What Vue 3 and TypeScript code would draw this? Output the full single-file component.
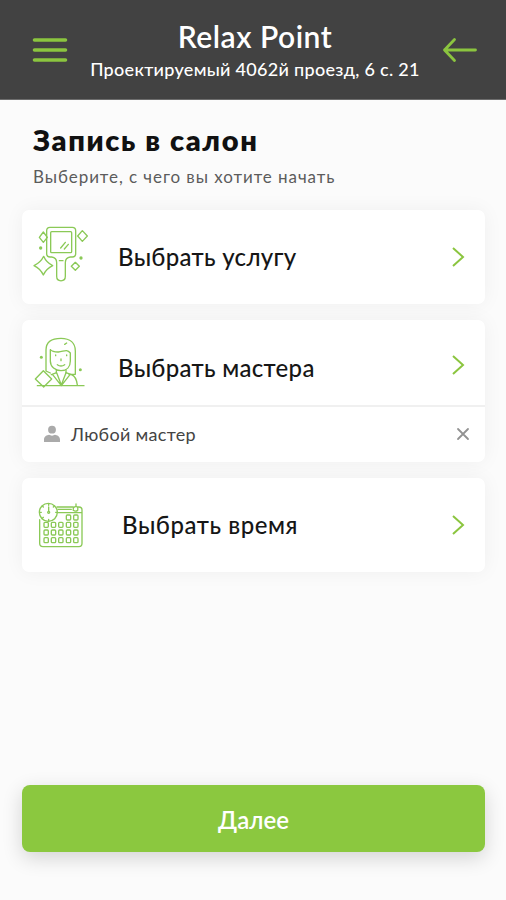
<script setup lang="ts">
import { ref } from 'vue'

const masterChosen = ref(true)
const calendarDays = [
  { x: 124, y: 78 }, { x: 146, y: 78 },
  ...[0, 1, 2].flatMap((row) =>
    [57, 79, 101, 124, 146].map((x) => ({ x, y: 100 + row * 23 })),
  ),
]
</script>

<template>
  <div class="screen">
    <header class="header">
      <button class="icon-button" aria-label="Меню">
        <svg width="36" height="28" viewBox="0 0 36 28" class="menu">
          <path d="M2.500 4H33.500M2.500 14H33.500M2.500 24H33.500" />
        </svg>
      </button>
      <div class="place">
        <h1 class="name">Relax Point</h1>
        <p class="address">Проектируемый 4062й проезд, 6 с. 21</p>
      </div>
      <button class="icon-button" aria-label="Назад">
        <svg width="36" height="28" viewBox="0 0 36 28" class="back">
          <path d="M33.500 14H2.500M12.500 3.500L2.500 14L12.500 24.500" />
        </svg>
      </button>
    </header>

    <main class="content">
      <h2 class="title">Запись в салон</h2>
      <p class="hint">Выберите, с чего вы хотите начать</p>

      <section class="card">
        <div class="row">
          <svg class="picture mirror" viewBox="0 0 225 225">
            <path d="M75 37H142Q152 37 152 47V116Q152 126 142 126H136Q121 128 121 143V184C121 202 95 202 95 184V143Q95 128 80 126H75Q65 126 65 116V47Q65 37 75 37Z" />
            <rect x="77" y="50" width="63" height="63" rx="3" />
            <path d="M107 99L121 82M118 102L130 88M103 137H114" />
            <path d="M56 124Q64 143 83 152Q64 161 55 180Q46 161 27 152Q47 143 56 124Z" />
            <path d="M55 51L67 67L55 82L43 67ZM172 47L187 63L172 79L158 63ZM151 142L163 154L151 166L139 154Z" />
            <g class="dots"><circle cx="47" cy="99" r="5" /><circle cx="168" cy="129" r="5" /></g>
          </svg>
          <span class="label service">Выбрать услугу</span>
          <svg class="chevron" viewBox="0 0 14 22"><path d="M2 2L12 11L2 20" /></svg>
        </div>
      </section>

      <section class="card master-card">
        <div class="row">
          <svg class="picture" viewBox="0 0 225 225">
            <path d="M63 138V75C63 49 82 40 108 40C136 40 151 55 151 78V148H132M63 138L76 144" />
            <path d="M76 74V108C76 126 91 137 108 137C125 137 136 126 136 108V84M76 74Q82 81 99 81C114 82 124 69 136 84" />
            <path d="M97 119Q108 127 119 119M108 102V107M92 90V92M125 90V92M94 134V144M123 134V144" />
            <path d="M79 149L95 143L109 180L123 143L139 149Q154 154 157 180M83 149L109 182M135 149L109 182" />
            <path d="M55 137L80 162L56 186L31 162ZM37 182H177M119 58L125 54" />
            <g class="dots"><circle cx="49" cy="97" r="4.500" /><circle cx="166" cy="134" r="4.500" /></g>
          </svg>
          <span class="label master">Выбрать мастера</span>
          <svg class="chevron" viewBox="0 0 14 22"><path d="M2 2L12 11L2 20" /></svg>
        </div>
        <div v-if="masterChosen" class="choice">
          <svg class="person" width="18" height="18" viewBox="0 0 18 18">
            <circle cx="9" cy="4.700" r="3.900" />
            <path d="M1 17V14.500C1 11.500 4 10 6 9.800C7.800 10.900 10.200 10.900 12 9.800C14 10 17 11.500 17 14.500V17Z" />
          </svg>
          <span class="choice-name">Любой мастер</span>
          <button class="clear" aria-label="Убрать" @click="masterChosen = false">
            <svg width="14" height="14" viewBox="0 0 14 14"><path d="M2 2L12 12M12 2L2 12" /></svg>
          </button>
        </div>
      </section>

      <section class="card">
        <div class="row">
          <svg class="picture calendar" viewBox="0 0 225 225">
            <path d="M96 54H145M158 54H162Q171 54 171 63V163Q171 173 162 173H54Q44 173 44 163V92M97 71H171M145 64Q143 54 153 52V45M153 52Q160 53 158 64Q151 69 145 64M99 61H139" />
            <circle cx="70" cy="70" r="27" />
            <circle cx="71" cy="70" r="3" />
            <path d="M71 54V67M71 44V49M44 70H49M92 70H96M71 91V96M52 51L55 54M88 51L85 54M52 88L55 85" />
            <rect v-for="day in calendarDays" :key="`${day.x}-${day.y}`" :x="day.x" :y="day.y" width="13" height="15" rx="3" />
          </svg>
          <span class="label time">Выбрать время</span>
          <svg class="chevron" viewBox="0 0 14 22"><path d="M2 2L12 11L2 20" /></svg>
        </div>
      </section>

      <button class="next">Далее</button>
    </main>
  </div>
</template>

<style>
body { background: #fbfbfb; }
</style>

<style scoped>
.screen {
  display: flex;
  flex-direction: column;
  height: 900px;
  font-family: Lato, "Open Sans", sans-serif;
  color: #161616;
}
h1, h2, p { margin: 0; font-weight: 400; white-space: nowrap; }
button { padding: 0; border: 0; background: none; font-family: inherit; cursor: pointer; }
svg { display: block; flex: none; fill: none; stroke-linecap: round; stroke-linejoin: round; }
.header {
  display: flex;
  justify-content: space-between;
  box-sizing: border-box;
  height: 100px;
  padding: 18px 28px 0 32px;
  background: #424242;
  border-bottom: 1px solid #6d6d6d;
}
.icon-button { height: 28px; margin-top: 18px; }
.menu { stroke: #8bc53f; stroke-width: 3.600; }
.back { stroke: #8bc53f; stroke-width: 2.800; }
.place { text-align: center; color: #fff; }
.name { font-size: 30px; line-height: 36px; font-weight: 600; letter-spacing: 0.5px; }
.address { margin-top: 3px; font-size: 18px; line-height: 24px; letter-spacing: 0.3px; font-weight: 500; }
.content { display: flex; flex-direction: column; flex: 1; padding: 22px 21px 48px 22px; }
.title { padding-left: 11px; font-size: 29px; line-height: 36px; font-weight: 800; letter-spacing: 1.650px; color: #111; }
.hint { padding-left: 11px; margin: 7px 0 21px; font-size: 17px; line-height: 24px; letter-spacing: 0.930px; color: #5c5c5c; }
.card {
  margin-bottom: 16px;
  background: #fff;
  border-radius: 7px;
  box-shadow: 0 0 20px rgba(0, 0, 0, 0.05);
}
.row { display: flex; align-items: center; height: 94px; padding-right: 20px; }
.picture { width: 75px; height: 75px; margin: 0 0 0 3px; stroke: #8bc957; stroke-width: 4; }
.mirror { margin-top: -10px; }
.calendar { margin-top: 3px; }
.dots { fill: #8bc957; stroke: none; }
.label { margin: 0 auto 0 18px; font-size: 24px; line-height: 32px; font-weight: 500; letter-spacing: 0.300px; white-space: nowrap; }
.chevron { width: 14px; height: 22px; stroke: #8bc53f; stroke-width: 2; stroke-linecap: butt; stroke-linejoin: miter; }
.master-card .row { height: 85px; }
.master-card .picture { margin-top: 0; }
.master-card .label { padding-top: 10px; }
.master-card .chevron { margin-top: 5px; }
.label.time { margin-left: 22px; letter-spacing: 0.550px; }
.choice { display: flex; align-items: center; box-sizing: border-box; height: 57px; padding: 0 15px 2px 21px; border-top: 2px solid #f0f0f0; }
.person { fill: #aaa; }
.choice-name { margin: 0 auto 0 10px; font-size: 18px; line-height: 24px; letter-spacing: 0.3px; color: #444; }
.clear svg { stroke: #929292; stroke-width: 1.800; }
.next {
  height: 67px;
  margin-top: auto;
  border-radius: 8px;
  background: #8bc83f;
  box-shadow: 0 6px 20px rgba(0, 0, 0, 0.16);
  color: #fff;
  font-size: 24px;
  font-weight: 600;
  line-height: 32px;
  padding-top: 3px;
}
</style>
